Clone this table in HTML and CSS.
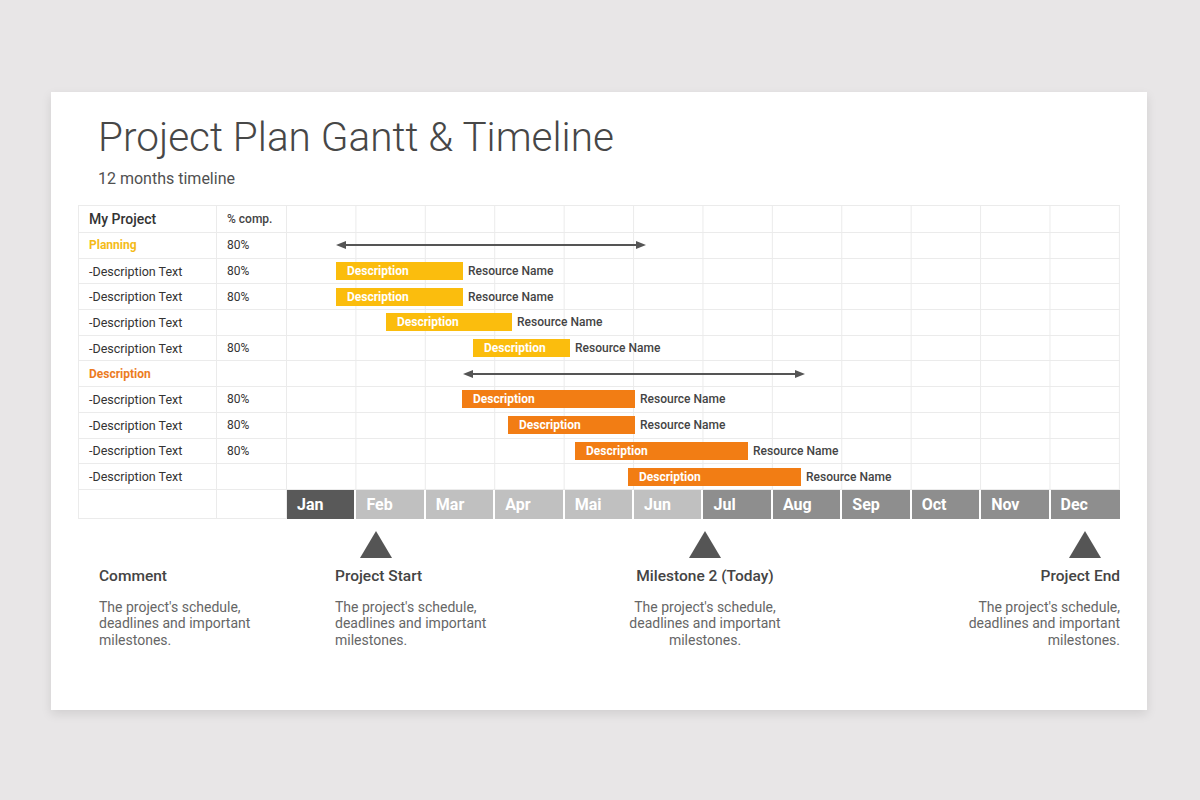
FILE: index.html
```html
<!DOCTYPE html>
<html lang="en">
<head>
<meta charset="utf-8">
<title>Project Plan Gantt &amp; Timeline</title>
<link rel="stylesheet" href="styles.css">
</head>
<body>
<div class="slide">
  <h1 class="title">Project Plan Gantt &amp; Timeline</h1>
  <p class="subtitle">12 months timeline</p>

  <div class="gantt">
    <div class="row head">
      <div class="cell label">My Project</div>
      <div class="cell pct">% comp.</div>
      <div class="track"></div>
    </div>

    <div class="row">
      <div class="cell label group yellow">Planning</div>
      <div class="cell pct">80%</div>
      <div class="track"><div class="arrow" style="margin-left:49px;width:310px"><span class="line"></span></div></div>
    </div>
    <div class="row">
      <div class="cell label">-Description Text</div>
      <div class="cell pct">80%</div>
      <div class="track"><div class="bar yellow-bg" style="margin-left:49px;width:127px">Description</div><span class="res">Resource Name</span></div>
    </div>
    <div class="row">
      <div class="cell label">-Description Text</div>
      <div class="cell pct">80%</div>
      <div class="track"><div class="bar yellow-bg" style="margin-left:49px;width:127px">Description</div><span class="res">Resource Name</span></div>
    </div>
    <div class="row">
      <div class="cell label">-Description Text</div>
      <div class="cell pct"></div>
      <div class="track"><div class="bar yellow-bg" style="margin-left:99px;width:126px">Description</div><span class="res">Resource Name</span></div>
    </div>
    <div class="row">
      <div class="cell label">-Description Text</div>
      <div class="cell pct">80%</div>
      <div class="track"><div class="bar yellow-bg" style="margin-left:186px;width:97px">Description</div><span class="res">Resource Name</span></div>
    </div>

    <div class="row">
      <div class="cell label group orange">Description</div>
      <div class="cell pct"></div>
      <div class="track"><div class="arrow" style="margin-left:176px;width:342px"><span class="line"></span></div></div>
    </div>
    <div class="row">
      <div class="cell label">-Description Text</div>
      <div class="cell pct">80%</div>
      <div class="track"><div class="bar orange-bg" style="margin-left:175px;width:173px">Description</div><span class="res">Resource Name</span></div>
    </div>
    <div class="row">
      <div class="cell label">-Description Text</div>
      <div class="cell pct">80%</div>
      <div class="track"><div class="bar orange-bg" style="margin-left:221px;width:127px">Description</div><span class="res">Resource Name</span></div>
    </div>
    <div class="row">
      <div class="cell label">-Description Text</div>
      <div class="cell pct">80%</div>
      <div class="track"><div class="bar orange-bg" style="margin-left:288px;width:173px">Description</div><span class="res">Resource Name</span></div>
    </div>
    <div class="row">
      <div class="cell label">-Description Text</div>
      <div class="cell pct"></div>
      <div class="track"><div class="bar orange-bg" style="margin-left:341px;width:173px">Description</div><span class="res">Resource Name</span></div>
    </div>

    <div class="row month-row">
      <div class="cell label"></div>
      <div class="cell pct"></div>
      <div class="months">
        <div class="m now">Jan</div>
        <div class="m past">Feb</div>
        <div class="m past">Mar</div>
        <div class="m past">Apr</div>
        <div class="m past">Mai</div>
        <div class="m past">Jun</div>
        <div class="m future">Jul</div>
        <div class="m future">Aug</div>
        <div class="m future">Sep</div>
        <div class="m future">Oct</div>
        <div class="m future">Nov</div>
        <div class="m future">Dec</div>
      </div>
    </div>
  </div>

  <div class="milestones">
    <div class="ms ms-comment">
      <div class="tri-space"></div>
      <h3>Comment</h3>
      <p>The project's schedule,<br>deadlines and important<br>milestones.</p>
    </div>
    <div class="ms ms-start">
      <svg class="tri" width="32" height="27" viewBox="0 0 32 27"><polygon points="16,0 32,27 0,27" fill="#555"/></svg>
      <h3>Project Start</h3>
      <p>The project's schedule,<br>deadlines and important<br>milestones.</p>
    </div>
    <div class="ms ms-mid">
      <svg class="tri" width="32" height="27" viewBox="0 0 32 27"><polygon points="16,0 32,27 0,27" fill="#555"/></svg>
      <h3>Milestone 2 (Today)</h3>
      <p>The project's schedule,<br>deadlines and important<br>milestones.</p>
    </div>
    <div class="ms ms-end">
      <svg class="tri" width="32" height="27" viewBox="0 0 32 27"><polygon points="16,0 32,27 0,27" fill="#555"/></svg>
      <h3>Project End</h3>
      <p>The project's schedule,<br>deadlines and important<br>milestones.</p>
    </div>
  </div>
</div>
</body>
</html>
```

FILE: styles.css
```css
html, body {
  margin: 0;
  padding: 0;
}
body {
  background: #e8e6e7;
  font-family: Roboto, "Liberation Sans", Arial, sans-serif;
  color: #333;
  height: 800px;
  overflow: hidden;
}
.slide {
  box-sizing: border-box;
  margin: 92px 0 0 51px;
  width: 1096px;
  height: 618px;
  background: #fff;
  padding: 20px 27px 0 27px;
  box-shadow: 0 4px 10px rgba(0, 0, 0, 0.10);
}
.title {
  margin: 0 0 0 20px;
  font-size: 40.5px;
  line-height: 50px;
  font-weight: 300;
  color: #474747;
  letter-spacing: 0;
}
.subtitle {
  margin: 7px 0 0 20px;
  font-size: 16px;
  line-height: 20px;
  color: #505050;
}

/* gantt table */
.gantt {
  margin-top: 16px;
  border-top: 1px solid #ebebeb;
  border-left: 1px solid #ebebeb;
  width: 1042px;
  box-sizing: border-box;
}
.row {
  display: grid;
  grid-template-columns: 138px 70px 1fr;
  height: 25.7px;
  box-sizing: border-box;
}
.row.head {
  height: 27px;
}
.cell {
  box-sizing: border-box;
  border-right: 1px solid #ebebeb;
  border-bottom: 1px solid #ebebeb;
  display: flex;
  align-items: center;
  padding-left: 10px;
  font-size: 12.5px;
  color: #333;
  white-space: nowrap;
}
.head .label {
  font-size: 14px;
  font-weight: 500;
  color: #333;
}
.head .pct {
  font-size: 12px;
  font-weight: 500;
  color: #444;
}
.pct {
  font-size: 12px;
  color: #333;
}
.group {
  font-weight: 700;
  font-size: 12px;
}
.yellow { color: #f4bb18; }
.orange { color: #ec7c1f; }

.track {
  box-sizing: border-box;
  display: flex;
  align-items: center;
  border-bottom: 1px solid #ebebeb;
  background-image: linear-gradient(to right, transparent calc(100% - 1px), #ebebeb calc(100% - 1px));
  background-size: calc(100% / 12) 100%;
  background-repeat: repeat-x;
  min-width: 0;
}
.bar {
  flex: none;
  box-sizing: border-box;
  height: 18px;
  padding-left: 11px;
  display: flex;
  align-items: center;
  color: #fff;
  font-size: 12px;
  font-weight: 700;
}
.yellow-bg { background: #fbbd0d; }
.orange-bg { background: #f27d14; }
.res {
  margin-left: 5px;
  font-size: 12px;
  font-weight: 500;
  color: #444;
  white-space: nowrap;
}
.arrow {
  flex: none;
  display: flex;
  align-items: center;
  height: 10px;
}
.arrow::before,
.arrow::after {
  content: "";
  flex: none;
  width: 0;
  height: 0;
  border-top: 4px solid transparent;
  border-bottom: 4px solid transparent;
}
.arrow::before {
  border-right: 10px solid #555;
}
.arrow::after {
  border-left: 10px solid #555;
}
.arrow .line {
  flex: 1;
  height: 2px;
  background: #555;
}

.month-row {
  height: 29px;
}
.months {
  display: grid;
  grid-template-columns: repeat(12, 1fr);
}
.m {
  box-sizing: border-box;
  border-right: 2px solid #fff;
  display: flex;
  align-items: center;
  padding-left: 10px;
  color: #fff;
  font-size: 16px;
  font-weight: 700;
}
.m:last-child {
  border-right: none;
}
.now { background: #595959; }
.past { background: #c0c0c0; }
.future { background: #8e8e8e; }

/* milestones */
.milestones {
  display: grid;
  grid-template-columns: 257px 270px 200px 1fr;
  margin-top: 12px;
}
.ms h3 {
  margin: 9px 0 0 0;
  font-size: 15.5px;
  line-height: 19px;
  font-weight: 500;
  color: #444;
}
.ms p {
  margin: 13px 0 0 0;
  font-size: 14px;
  line-height: 16.5px;
  color: #666;
}
.tri, .tri-space {
  display: block;
  height: 27px;
}
.ms-comment {
  padding-left: 21px;
}
.ms-start .tri {
  margin-left: 25px;
}
.ms-mid {
  text-align: center;
}
.ms-mid .tri {
  margin: 0 auto;
}
.ms-end {
  text-align: right;
}
.ms-end .tri {
  margin-left: auto;
  margin-right: 19px;
}
```
